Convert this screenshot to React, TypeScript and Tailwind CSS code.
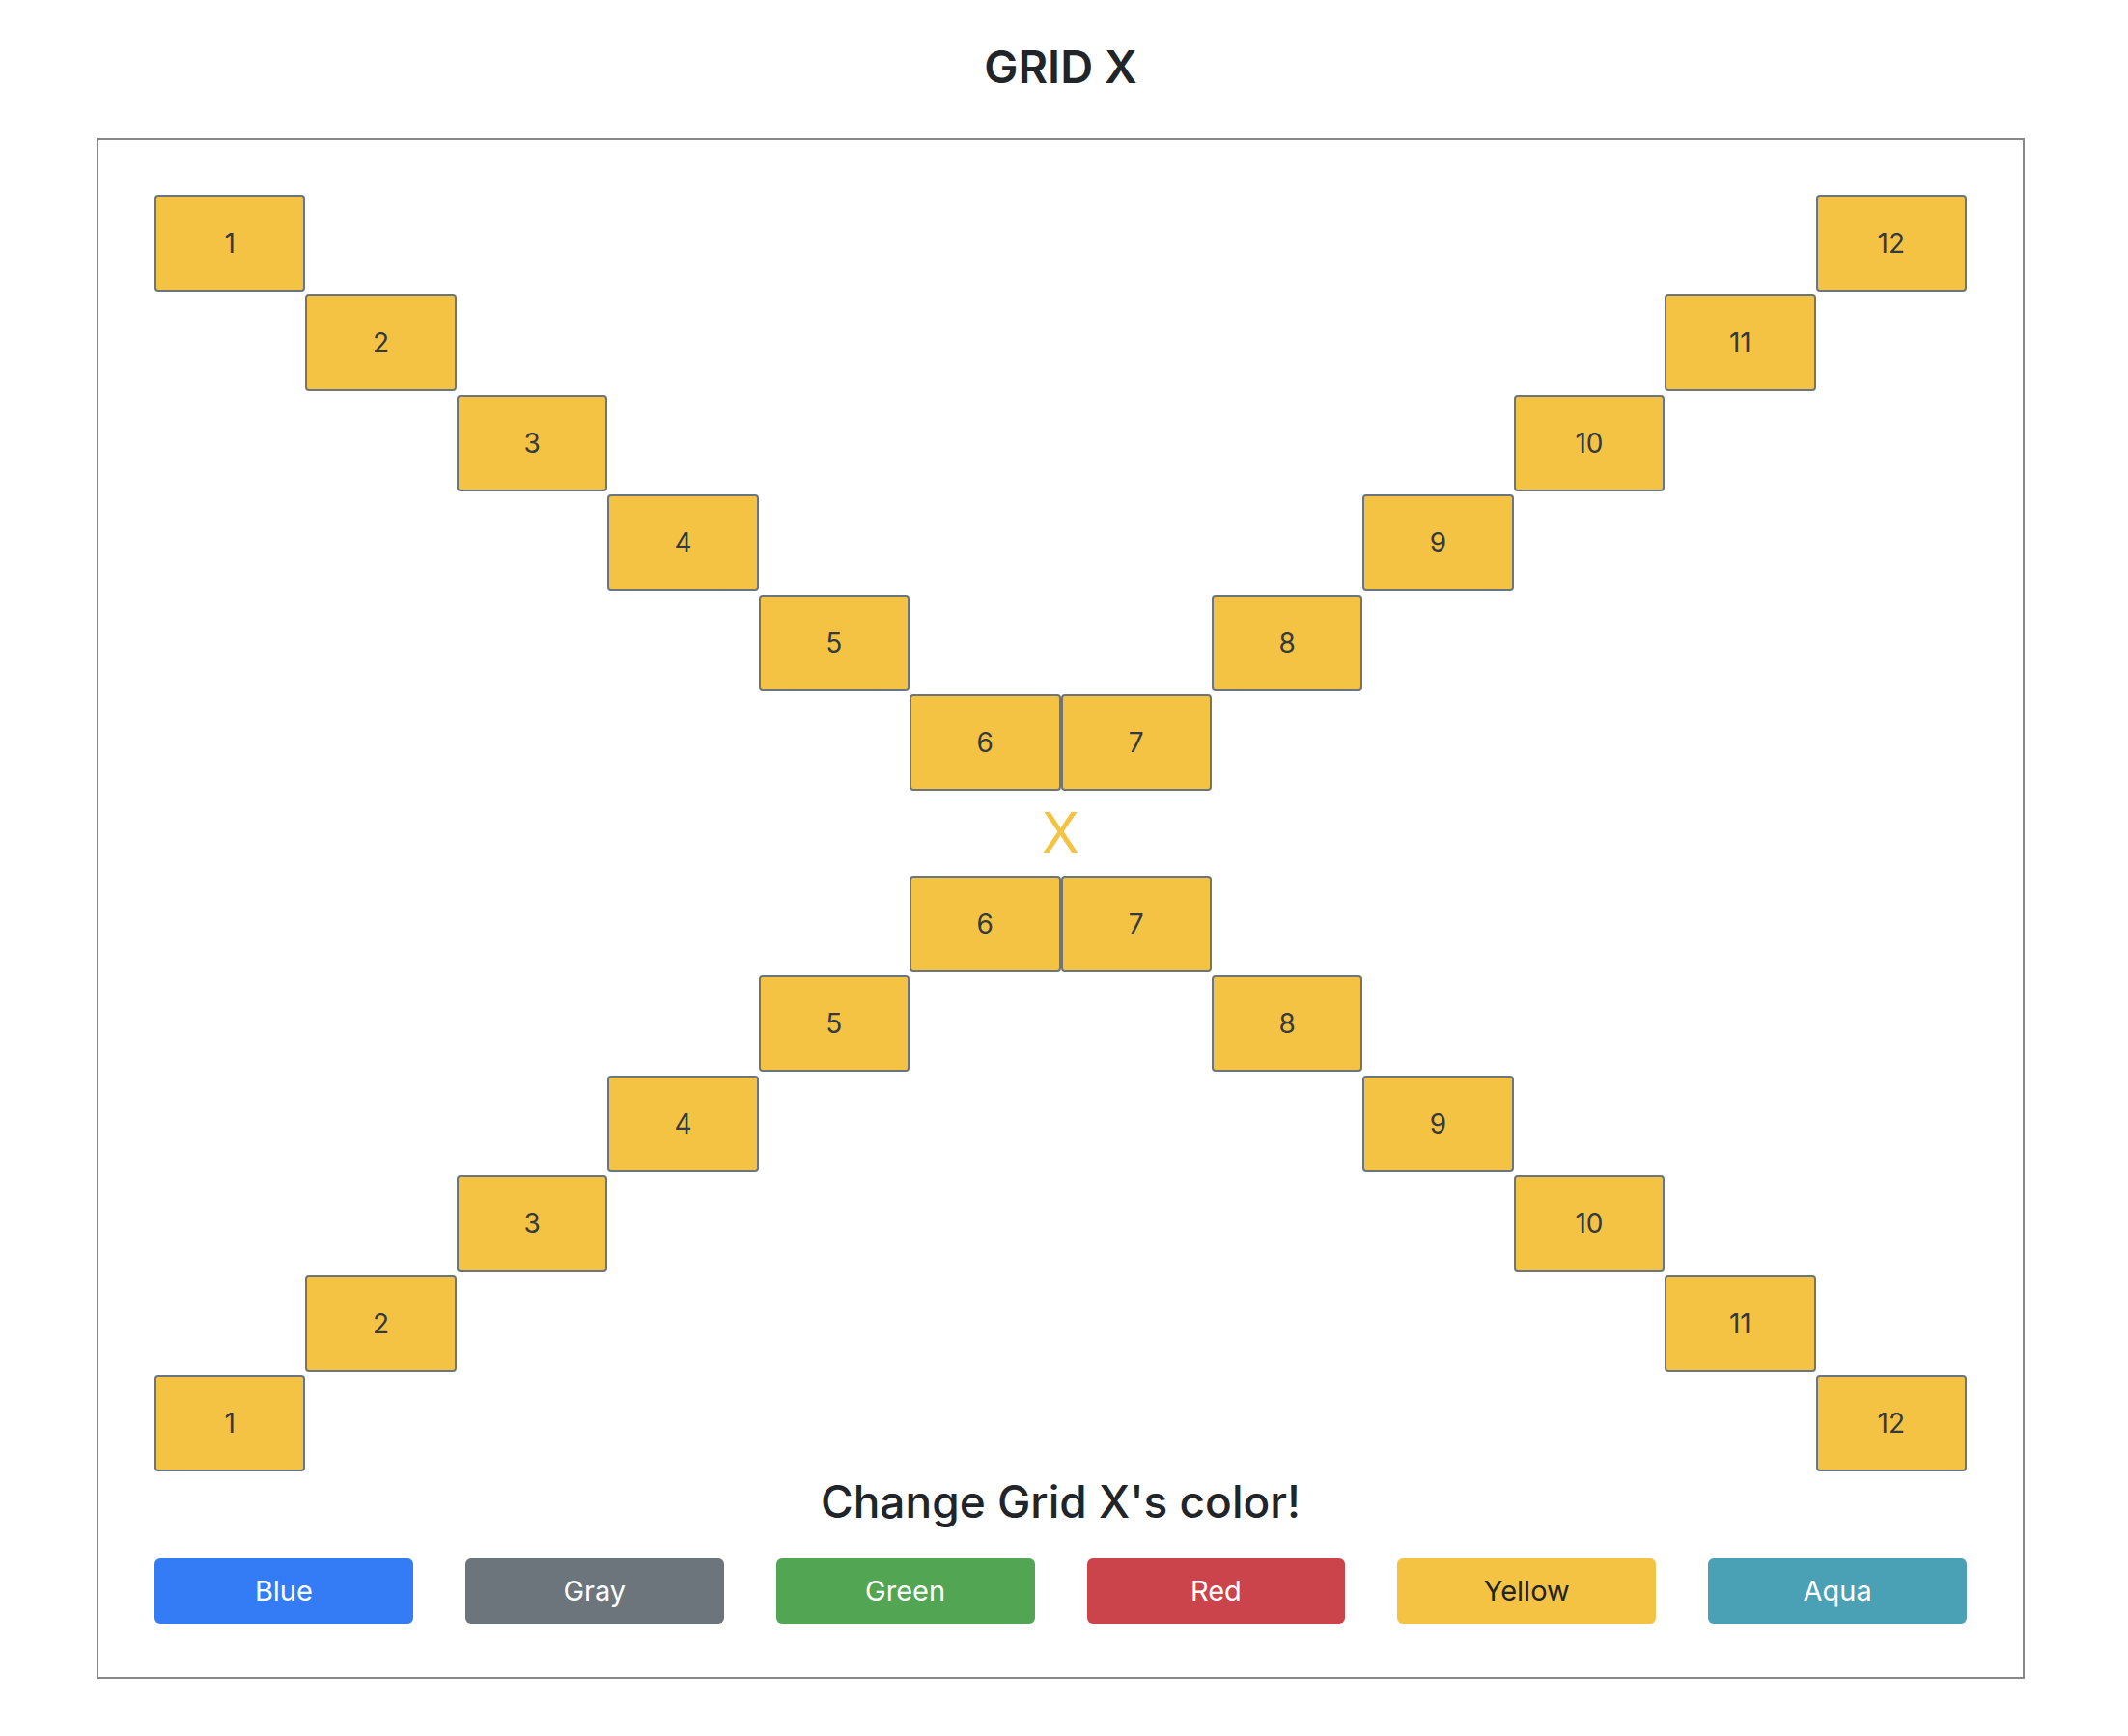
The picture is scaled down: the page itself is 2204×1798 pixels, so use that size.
const leftStart = [
  "col-start-1",
  "col-start-2",
  "col-start-3",
  "col-start-4",
  "col-start-5",
  "col-start-6",
  "col-start-7",
  "col-start-8",
  "col-start-9",
  "col-start-10",
  "col-start-11",
  "col-start-12",
];

const rowStart = [
  "row-start-1",
  "row-start-2",
  "row-start-3",
  "row-start-4",
  "row-start-5",
  "row-start-6",
];

const buttons = [
  { label: "Blue", cls: "bg-[#337cf5] text-white" },
  { label: "Gray", cls: "bg-[#6c757c] text-white" },
  { label: "Green", cls: "bg-[#52a552] text-white" },
  { label: "Red", cls: "bg-[#cc444b] text-white" },
  { label: "Yellow", cls: "bg-[#f5c344] text-[#212529]" },
  { label: "Aqua", cls: "bg-[#4aa0b5] text-white" },
];

function Cell({ n, row }: { n: number; row: number }) {
  return (
    <div
      className={`${leftStart[n - 1]} ${rowStart[row]} h-[100px] flex items-center justify-center bg-[#f5c344] border-2 border-[#6c757d] rounded-[4px] text-[28px] text-[#343a40]`}
    >
      {n}
    </div>
  );
}

// top half: 1..6 going down-right, 12..7 going down-left
const top = Array.from({ length: 6 }, (_, r) => [r + 1, 12 - r]);
// bottom half: 6..1 going down-left, 7..12 going down-right
const bottom = Array.from({ length: 6 }, (_, r) => [6 - r, 7 + r]);

export default function App() {
  return (
    <div className="min-h-screen bg-white font-['Inter','Noto_Sans',sans-serif] text-[#212529]">
      <div className="ml-[100px] w-[1997px]">
        <h1 className="pt-[41px] text-center text-[47px] leading-[56px] font-semibold">GRID X</h1>

        <div className="mt-[46px] border-2 border-[#888888] px-[58px] pt-[57px] pb-[55px]">
          <div className="grid grid-cols-12 gap-y-[3.4px]">
            {top.map(([a, b], r) => (
              <div key={r} className="contents">
                <Cell n={a} row={r} />
                <Cell n={b} row={r} />
              </div>
            ))}
          </div>

          <div className="h-[88px] flex items-center justify-center text-[57px] leading-none text-[#f5c344]">
            X
          </div>

          <div className="grid grid-cols-12 gap-y-[3.4px]">
            {bottom.map(([a, b], r) => (
              <div key={r} className="contents">
                <Cell n={a} row={r} />
                <Cell n={b} row={r} />
              </div>
            ))}
          </div>

          <h2 className="mt-[2px] text-center text-[46px] leading-[58px] font-medium">
            Change Grid X's color!
          </h2>

          <div className="mt-[30px] grid grid-cols-6 gap-x-[54px]">
            {buttons.map((b) => (
              <button
                key={b.label}
                className={`${b.cls} h-[68px] rounded-[6px] text-[29px]`}
              >
                {b.label}
              </button>
            ))}
          </div>
        </div>
      </div>
    </div>
  );
}
